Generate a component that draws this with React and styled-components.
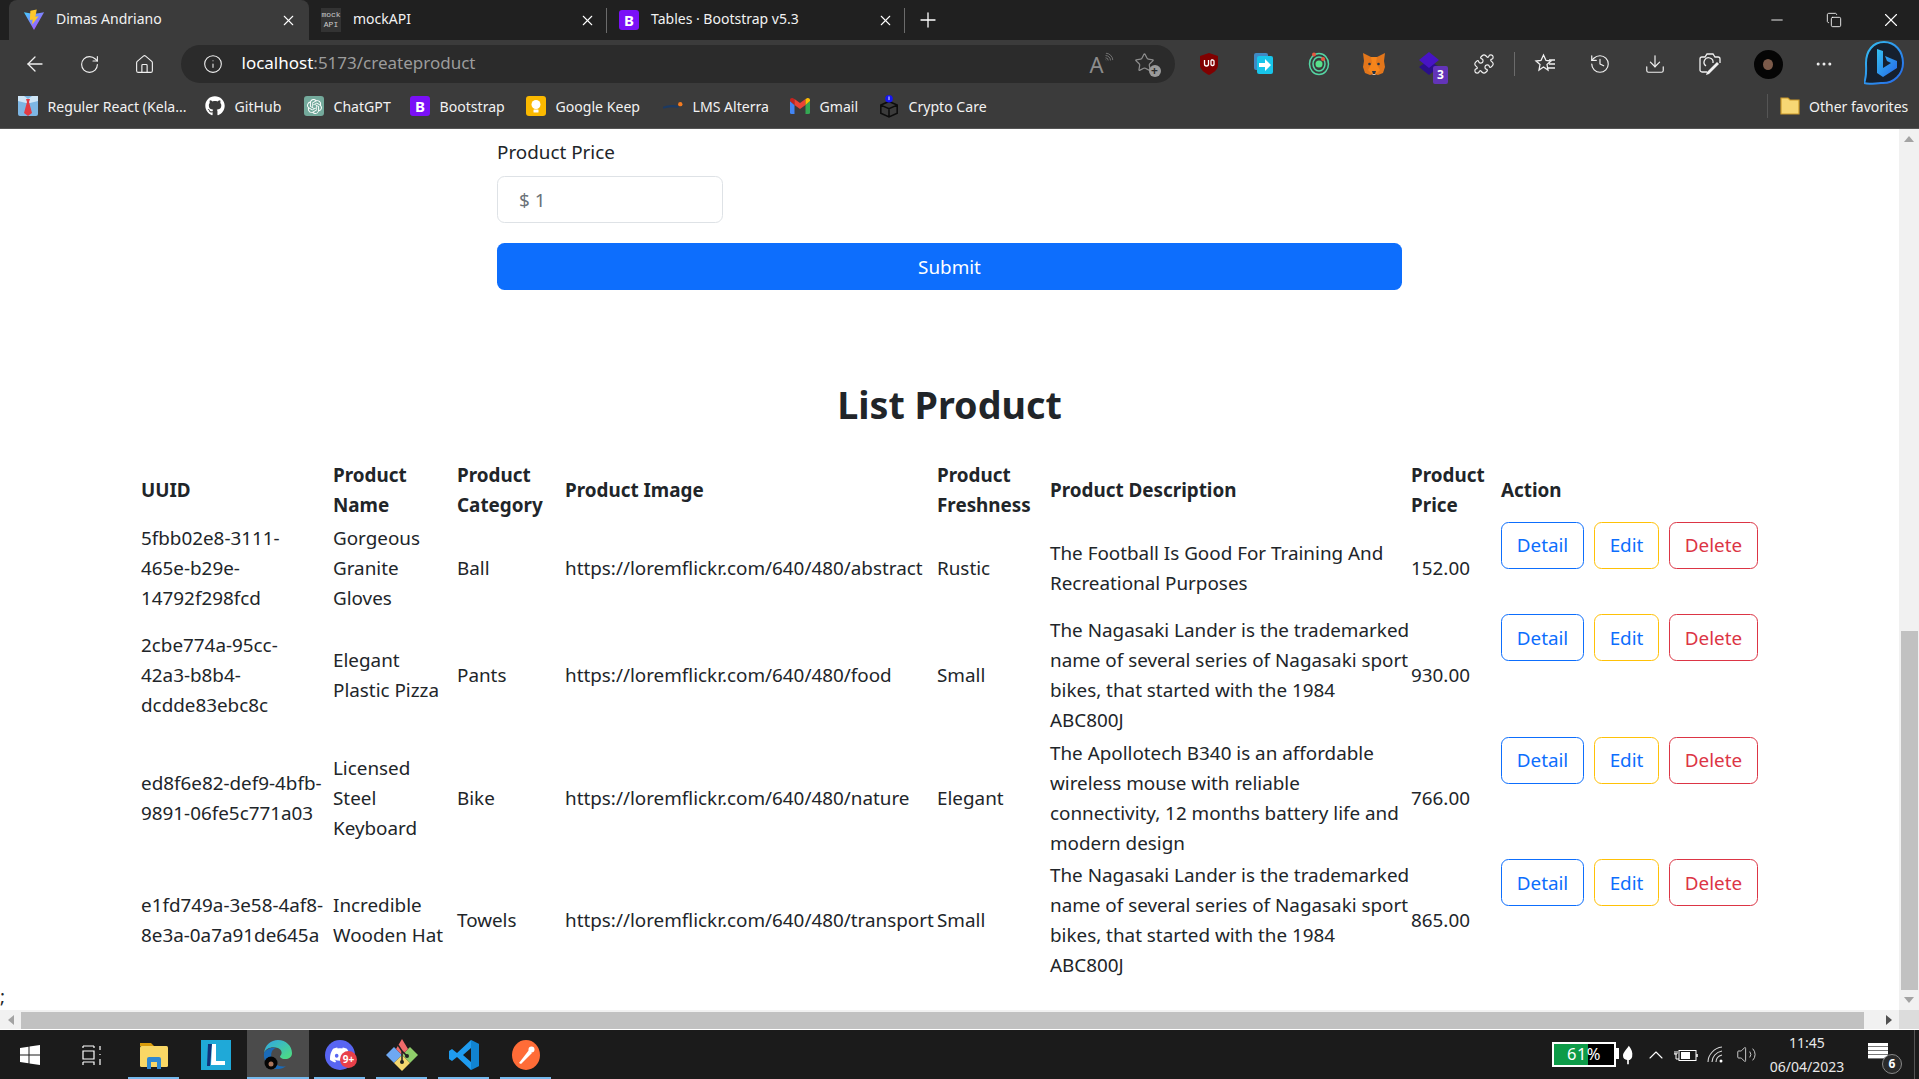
import styled, { createGlobalStyle } from "styled-components";
import {
  ArrowLeft, RotateCw, Home, Info, X, Plus, Minus, Copy, Puzzle, History, Download, MoreHorizontal, Star, ChevronUp, Volume2, Wifi,
} from "lucide-react";
import { FaGithub } from "react-icons/fa";
import { SiOpenai, SiDiscord } from "react-icons/si";

const products = [
  {
    uuid: "5fbb02e8-3111-\n465e-b29e-\n14792f298fcd",
    name: "Gorgeous\nGranite\nGloves",
    category: "Ball",
    image: "https://loremflickr.com/640/480/abstract",
    freshness: "Rustic",
    description: "The Football Is Good For Training And\nRecreational Purposes",
    price: "152.00",
  },
  {
    uuid: "2cbe774a-95cc-\n42a3-b8b4-\ndcdde83ebc8c",
    name: "Elegant\nPlastic Pizza",
    category: "Pants",
    image: "https://loremflickr.com/640/480/food",
    freshness: "Small",
    description: "The Nagasaki Lander is the trademarked\nname of several series of Nagasaki sport\nbikes, that started with the 1984\nABC800J",
    price: "930.00",
  },
  {
    uuid: "ed8f6e82-def9-4bfb-\n9891-06fe5c771a03",
    name: "Licensed\nSteel\nKeyboard",
    category: "Bike",
    image: "https://loremflickr.com/640/480/nature",
    freshness: "Elegant",
    description: "The Apollotech B340 is an affordable\nwireless mouse with reliable\nconnectivity, 12 months battery life and\nmodern design",
    price: "766.00",
  },
  {
    uuid: "e1fd749a-3e58-4af8-\n8e3a-0a7a91de645a",
    name: "Incredible\nWooden Hat",
    category: "Towels",
    image: "https://loremflickr.com/640/480/transport",
    freshness: "Small",
    description: "The Nagasaki Lander is the trademarked\nname of several series of Nagasaki sport\nbikes, that started with the 1984\nABC800J",
    price: "865.00",
  },
];

const columns = [
  { label: "UUID", width: 192 },
  { label: "Product\nName", width: 124 },
  { label: "Product\nCategory", width: 108 },
  { label: "Product Image", width: 372 },
  { label: "Product\nFreshness", width: 113 },
  { label: "Product Description", width: 361 },
  { label: "Product\nPrice", width: 90 },
  { label: "Action", width: 260 },
];

function ViteIcon() {
  return (
    <svg width="22" height="22" viewBox="0 0 24 24">
      <defs>
        <linearGradient id="vt" x1="0" y1="0" x2="1" y2="1">
          <stop offset="0" stopColor="#41d1ff" />
          <stop offset="1" stopColor="#bd34fe" />
        </linearGradient>
      </defs>
      <path d="M1 3.5 12 5.5 23 3.5 12 23Z" fill="url(#vt)" />
      <path d="M15 0.5 8 2 7.5 12 10.5 11.5 10 17 17 8 13.5 8.5Z" fill="#ffc729" />
    </svg>
  );
}

function ReactTile() {
  return (
    <svg width="20" height="20" viewBox="0 0 20 20">
      <rect width="20" height="20" rx="2" fill="#7db6e4" />
      <path d="M0 0h6l4 3 4-3h6v5l-8 2H8L0 5Z" fill="#cfe6f7" />
      <path d="M8 3h4l-1 3 3 11-4 3-4-3 3-11Z" fill="#e23b44" />
    </svg>
  );
}

function KeepIcon() {
  return (
    <svg width="20" height="20" viewBox="0 0 20 20">
      <rect width="20" height="20" rx="3" fill="#fbb900" />
      <circle cx="10" cy="8.5" r="4.5" fill="#fff" />
      <rect x="7.5" y="13.5" width="5" height="3" rx="0.5" fill="#fff" />
    </svg>
  );
}

function AlterraIcon() {
  return (
    <svg width="22" height="12" viewBox="0 0 22 12">
      <path d="M0 8C5 6 12 6 17 7" stroke="#1c3a63" strokeWidth="2.4" fill="none" />
      <circle cx="19" cy="4" r="2.4" fill="#f47b20" />
    </svg>
  );
}

function GmailIcon() {
  return (
    <svg width="20" height="16" viewBox="0 0 20 16">
      <path d="M0 3v11.5A1.5 1.5 0 0 0 1.5 16H4.5V7Z" fill="#4285f4" />
      <path d="M15.5 7v9h3a1.5 1.5 0 0 0 1.5-1.5V3Z" fill="#34a853" />
      <path d="M0 3 4.5 7V1L3 0.3C1.5-.4 0 .7 0 2Z" fill="#c5221f" />
      <path d="M4.5 1v6L10 11l5.5-4V1L10 5Z" fill="#ea4335" />
      <path d="M15.5 1v6L20 3V2c0-1.3-1.5-2.4-3-1.7Z" fill="#fbbc04" />
    </svg>
  );
}

function CryptoIcon() {
  return (
    <svg width="22" height="26" viewBox="0 0 22 26">
      <path d="M11 8 20 12v9l-9 4-9-4v-9Z M2 12l9 4 9-4 M11 16v9" fill="none" stroke="#0c0c0c" strokeWidth="1.7" />
      <circle cx="11" cy="5" r="4.2" fill="#1616f0" />
      <rect x="10.5" y="2.5" width="1" height="4" fill="#fff" />
    </svg>
  );
}

function UblockIcon() {
  return (
    <svg width="20" height="24" viewBox="0 0 20 24">
      <path d="M10 1 19 4v9c0 5-5 8-9 10-4-2-9-5-9-10V4Z" fill="#800000" />
      <path d="M5.5 8v4a2 2 0 0 0 4 0V8 M12.5 8h1.5a1.5 1.5 0 0 1 1 1v3.5a1.5 1.5 0 0 1-1 1h-1a1.5 1.5 0 0 1-1-1V9a1 1 0 0 1 .5-1Z" fill="none" stroke="#fff" strokeWidth="1.3" />
    </svg>
  );
}

function ShareIcon() {
  return (
    <svg width="20" height="22" viewBox="0 0 20 22">
      <rect x="0" y="0" width="14" height="17" rx="2" fill="#3f89c4" />
      <rect x="3" y="3" width="16" height="18" rx="2" fill="#17c5ea" />
      <path d="M5 10h6V6l6 6-6 6v-4H5Z" fill="#fff" />
    </svg>
  );
}

function TargetIcon() {
  return (
    <svg width="22" height="24" viewBox="0 0 22 24">
      <ellipse cx="11" cy="12" rx="9.5" ry="10.5" fill="none" stroke="#54d6a4" strokeWidth="1.5" />
      <ellipse cx="11" cy="12" rx="6" ry="7" fill="none" stroke="#54d6a4" strokeWidth="1.5" />
      <circle cx="11" cy="12" r="3.5" fill="#58e08c" />
      <circle cx="6" cy="2.5" r="2" fill="#e8573f" />
      <circle cx="15" cy="7" r="2" fill="#e8573f" />
    </svg>
  );
}

function FoxIcon() {
  return (
    <svg width="22" height="24" viewBox="0 0 22 24">
      <path d="M0 1 8 5h6l8-4-1 8 1 6-2 6-5 2-4-1-4 1-5-2-2-6 1-6Z" fill="#e2761b" />
      <path d="M8 5h6l-1 6 4 7-4 4H9l-4-4 4-7Z" fill="#f6851b" />
      <path d="M9 19h4l-1 3h-2Z" fill="#233447" />
      <path d="M9 22h4l-1 1h-2Z" fill="#d7c1b3" />
      <circle cx="6.5" cy="12" r="1.3" fill="#233447" />
      <circle cx="15.5" cy="12" r="1.3" fill="#233447" />
    </svg>
  );
}

function StackIcon() {
  return (
    <svg width="22" height="24" viewBox="0 0 22 24">
      <path d="M11 8 21 15 11 23 1 15Z" fill="#2a0f8a" />
      <path d="M11 0 21 8 11 16 1 8Z" fill="#4714c4" />
    </svg>
  );
}

function FavListIcon() {
  return (
    <svg width="22" height="22" viewBox="0 0 22 22" fill="none" stroke="#f0f0f0" strokeWidth="1.3">
      <path d="M9.5 2 12 7.5 17 8l-4 3.5 1 5.5-4.5-3L5 17l1-5.5L2 8l5-.5Z" />
      <path d="M15 7h6M15 11h6M13 15h8" />
    </svg>
  );
}

function CaptureIcon() {
  return (
    <svg width="24" height="24" viewBox="0 0 24 24" fill="none" stroke="#f0f0f0" strokeWidth="1.3">
      <path d="M9 20H4a2 2 0 0 1-2-2V7a2 2 0 0 1 2-2h3l2-3h6l2 3h3a2 2 0 0 1 2 2v4" />
      <path d="M8 14a4.5 4.5 0 1 1 7 -3" />
      <path d="M21 12 11 22l-3 1 1-3 10-10Z" fill="#f0f0f0" stroke="none" />
    </svg>
  );
}

function BingIcon() {
  return (
    <svg width="40" height="46" viewBox="0 0 40 46">
      <defs>
        <linearGradient id="bg" x1="0" y1="0" x2="1" y2="1">
          <stop offset="0" stopColor="#35c1f1" />
          <stop offset="1" stopColor="#2566e8" />
        </linearGradient>
      </defs>
      <path d="M20 1C9 1 2 10 2 22c0 6 1 13-2 20 5 2 12 0 17 0 13 1 22-9 22-20C39 10 31 1 20 1Z" fill="#16202e" stroke="url(#bg)" strokeWidth="2" />
      <path d="M13 8l6 2v17l8-5-4-2-2-5 12 5v7L19 36l-6-4Z" fill="url(#bg)" />
    </svg>
  );
}

function WinLogo() {
  return (
    <svg width="20" height="20" viewBox="0 0 20 20" fill="#fff">
      <path d="M0 3 8.5 1.8V9.5H0Z M9.5 1.6 20 0V9.5H9.5Z M0 10.5H8.5V18.2L0 17Z M9.5 10.5H20V20L9.5 18.4Z" />
    </svg>
  );
}

function TaskViewIcon() {
  return (
    <svg width="20" height="20" viewBox="0 0 20 20" fill="none" stroke="#fff" strokeWidth="1.2">
      <path d="M1 1h11M1 6h11v8H1Z M1 17h11v3M1 17v3M12 1v2M1 1v2" />
      <path d="M18 1v4M18 9v1M18 14v6" />
    </svg>
  );
}

function ExplorerIcon() {
  return (
    <svg width="28" height="28" viewBox="0 0 28 28">
      <path d="M0 2h11l3 3H0Z" fill="#d99b0a" />
      <rect y="5" width="28" height="21" rx="1.5" fill="#f9d765" />
      <path d="M7 28V18a2 2 0 0 1 2-2h10a2 2 0 0 1 2 2v10h-4v-7h-6v7Z" fill="#2f88d0" />
    </svg>
  );
}

function LTile() {
  return (
    <svg width="30" height="30" viewBox="0 0 30 30">
      <rect width="30" height="30" fill="#1fa9d8" />
      <path d="M7 4h4l-2 22H6Z" fill="#12337a" />
      <path d="M11 4h4v17h9v4H10Z" fill="#fff" />
    </svg>
  );
}

function EdgeIcon() {
  return (
    <svg width="32" height="32" viewBox="0 0 32 32">
      <defs>
        <linearGradient id="ed" x1="0" y1="0" x2="1" y2="1">
          <stop offset="0" stopColor="#2fa5e8" />
          <stop offset="1" stopColor="#50e07a" />
        </linearGradient>
      </defs>
      <path d="M2 14C3 6 9 1 16 1c8 0 14 6 14 13 0 4-3 6-7 6s-5-2-5-3c2-1 3-6-2-8C10 7 4 9 2 14Z" fill="url(#ed)" />
      <path d="M2 14c2-4 8-6 12-5-4 1-6 6-4 11 2 5 8 9 14 7-2 2-5 3-8 3C7 30 1 23 2 14Z" fill="#1a6bb8" />
      <circle cx="9" cy="24" r="6.5" fill="#050505" />
      <circle cx="9" cy="25" r="2.5" fill="#a8755c" />
    </svg>
  );
}

function GitForkIcon() {
  return (
    <svg width="32" height="32" viewBox="0 0 32 32">
      <path d="M16 16 24 8 32 16 24 24Z" fill="#8fce6a" />
      <path d="M16 16 8 8 0 16 8 24Z" fill="#6ea8f2" />
      <path d="M16 16 10 10 16 0 22 10Z" fill="#f06b6b" />
      <path d="M16 16 8 24 16 32 24 24Z" fill="#f5d76e" />
      <path d="M12 6 16 12V22M16 12 21 17" stroke="#222" strokeWidth="1.5" fill="none" />
      <circle cx="16" cy="23" r="2" fill="#222" />
      <circle cx="21" cy="17" r="2" fill="#222" />
    </svg>
  );
}

function CodeIcon() {
  return (
    <svg width="30" height="30" viewBox="0 0 30 30">
      <path d="M22 0 30 4V26L22 30 8 17 3 21 0 19V11L3 9 8 13ZM22 8 14 15 22 22Z" fill="#1f9cf0" />
      <path d="M22 0 30 4V26L22 30Z" fill="#0065a9" opacity="0.45" />
    </svg>
  );
}

function PostmanIcon() {
  return (
    <svg width="28" height="30" viewBox="0 0 28 30">
      <ellipse cx="14" cy="15" rx="14" ry="15" fill="#ff6c37" />
      <path d="M7 23 17 10l3 3L9 24Z" fill="#fff" />
      <circle cx="19.5" cy="9.5" r="3" fill="#fff" />
    </svg>
  );
}

function TrayBattery() {
  return (
    <svg width="24" height="14" viewBox="0 0 24 14" fill="none" stroke="#fff">
      <path d="M0 6h3M1 3v3M3 3v3M2 6v5h3" strokeWidth="1" />
      <rect x="5" y="2.5" width="17" height="10" />
      <rect x="7" y="4" width="9" height="7" fill="#fff" stroke="none" />
      <path d="M23 6v3" strokeWidth="1.5" />
    </svg>
  );
}

function TrayWifi() {
  return (
    <svg width="18" height="18" viewBox="0 0 18 18" fill="none" stroke="#d8d8d8" strokeWidth="1.1">
      <path d="M1 16C1 9 7 2 15 1M5 16C5 11 9 6 15 5M9 16c0-3 2-6 6-7" />
      <circle cx="14" cy="15" r="1.5" fill="#fff" stroke="none" />
    </svg>
  );
}

function TrayLeaf() {
  return (
    <svg width="10" height="20" viewBox="0 0 12 22">
      <path d="M7 0C10 4 12 8 11 13c-.5 3-3 4-4 4v5H5v-5C2 17 0 15 0 12 0 8 4 5 7 0Z" fill="#fff" />
    </svg>
  );
}

function ArrowGlyph({ dir, color = "#a3a3a3" }) {
  const points = {
    up: "0,6 5,0 10,6",
    down: "0,0 10,0 5,6",
    left: "6,0 6,10 0,5",
    right: "0,0 6,5 0,10",
  };
  const vertical = dir === "up" || dir === "down";
  return (
    <svg width={vertical ? 10 : 6} height={vertical ? 6 : 10}>
      <polygon points={points[dir]} fill={color} />
    </svg>
  );
}

export default function App() {
  const bookmarks = [
    { label: "Reguler React (Kela...", width: 187, icon: <ReactTile /> },
    { label: "GitHub", width: 99, icon: <FaGithub size={20} color="#fff" /> },
    { label: "ChatGPT", width: 106, icon: <GptTile><SiOpenai size={15} color="#fff" /></GptTile> },
    { label: "Bootstrap", width: 116, icon: <BootTile>B</BootTile> },
    { label: "Google Keep", width: 137, icon: <KeepIcon /> },
    { label: "LMS Alterra", width: 127, icon: <AlterraIcon /> },
    { label: "Gmail", width: 89, icon: <GmailIcon /> },
    { label: "Crypto Care", width: 110, icon: <CryptoIcon /> },
  ];

  return (
    <Screen>
      <GlobalStyle />
      <TabStrip>
        <Tab $active>
          <ViteIcon />
          <TabTitle>Dimas Andriano</TabTitle>
          <X size={17} color="#fff" strokeWidth={1.5} />
        </Tab>
        <Tab>
          <MockFav>mock<br />API</MockFav>
          <TabTitle>mockAPI</TabTitle>
          <X size={17} color="#fff" strokeWidth={1.5} />
        </Tab>
        <Tab>
          <BootTile>B</BootTile>
          <TabTitle>Tables · Bootstrap v5.3</TabTitle>
          <X size={17} color="#fff" strokeWidth={1.5} />
        </Tab>
        <NewTab><Plus size={24} color="#fff" strokeWidth={1.3} /></NewTab>
        <WindowControls>
          <WinButton><Minus size={18} color="#fff" strokeWidth={1.2} /></WinButton>
          <WinButton><Copy size={16} color="#fff" strokeWidth={1.3} /></WinButton>
          <WinButton><X size={22} color="#fff" strokeWidth={1.2} /></WinButton>
        </WindowControls>
      </TabStrip>

      <Toolbar>
        <Slot><ArrowLeft size={24} color="#f0f0f0" strokeWidth={1.3} /></Slot>
        <Slot><RotateCw size={21} color="#f0f0f0" strokeWidth={1.3} /></Slot>
        <Slot><Home size={21} color="#f0f0f0" strokeWidth={1.3} /></Slot>
        <AddressBar>
          <Info size={20} color="#f0f0f0" strokeWidth={1.3} />
          <Url>localhost<span>:5173/createproduct</span></Url>
          <ReadAloud>A<Wifi size={11} color="#8d8d8d" strokeWidth={1.5} /></ReadAloud>
          <AddFav>
            <Star size={21} color="#8d8d8d" strokeWidth={1.4} />
            <AddFavDot>+</AddFavDot>
          </AddFav>
        </AddressBar>
        <Slot><UblockIcon /></Slot>
        <Slot><ShareIcon /></Slot>
        <Slot><TargetIcon /></Slot>
        <Slot><FoxIcon /></Slot>
        <Slot>
          <StackIcon />
          <CountBadge>3</CountBadge>
        </Slot>
        <Slot><Puzzle size={22} color="#f0f0f0" strokeWidth={1.3} /></Slot>
        <ToolbarDivider />
        <Slot><FavListIcon /></Slot>
        <Slot><History size={22} color="#f0f0f0" strokeWidth={1.3} /></Slot>
        <Slot><Download size={22} color="#f0f0f0" strokeWidth={1.3} /></Slot>
        <Slot><CaptureIcon /></Slot>
        <Slot $w={62}><Avatar><AvatarFace /></Avatar></Slot>
        <Slot $w={50}><MoreHorizontal size={20} color="#f0f0f0" strokeWidth={1.6} /></Slot>
        <Slot $w={70}><BingIcon /></Slot>
      </Toolbar>

      <BookmarkBar>
        {bookmarks.map((b) => (
          <Bookmark key={b.label} $w={b.width}>
            <BookmarkIcon>{b.icon}</BookmarkIcon>
            {b.label}
          </Bookmark>
        ))}
        <OtherFavorites>
          <svg width="20" height="20" viewBox="0 0 20 20">
            <path d="M1 2h7l2 2h9v14H1Z" fill="#f7d774" stroke="#c9982a" strokeWidth="1.2" />
          </svg>
          Other favorites
        </OtherFavorites>
      </BookmarkBar>

      <Viewport>
        <Page>
          <FormBlock>
            <FieldLabel>Product Price</FieldLabel>
            <PriceInput readOnly value="$ 1" />
            <SubmitButton type="button">Submit</SubmitButton>
          </FormBlock>
          <Heading>List Product</Heading>
          <ProductTable>
            <colgroup>
              {columns.map((c) => <col key={c.label} width={c.width} />)}
            </colgroup>
            <thead>
              <tr>
                {columns.map((c) => <Th key={c.label}>{c.label}</Th>)}
              </tr>
            </thead>
            <tbody>
              {products.map((p) => (
                <tr key={p.uuid}>
                  <Td>{p.uuid}</Td>
                  <Td>{p.name}</Td>
                  <Td>{p.category}</Td>
                  <Td>{p.image}</Td>
                  <Td>{p.freshness}</Td>
                  <Td>{p.description}</Td>
                  <Td>{p.price}</Td>
                  <ActionCell>
                    <Actions>
                      <OutlineButton $border="#0d6efd" $w={83} $color="#0d6efd">Detail</OutlineButton>
                      <OutlineButton $border="#ffc107" $w={65} $color="#0d6efd">Edit</OutlineButton>
                      <OutlineButton $border="#dc3545" $w={89} $color="#dc3545">Delete</OutlineButton>
                    </Actions>
                  </ActionCell>
                </tr>
              ))}
            </tbody>
          </ProductTable>
          <Stray>;</Stray>
        </Page>
        <VScroll>
          <ScrollEnd><ArrowGlyph dir="up" /></ScrollEnd>
          <VTrack><VThumb /></VTrack>
          <ScrollEnd><ArrowGlyph dir="down" /></ScrollEnd>
        </VScroll>
      </Viewport>

      <HScroll>
        <HEnd><ArrowGlyph dir="left" /></HEnd>
        <HThumb />
        <HEnd><ArrowGlyph dir="right" color="#505050" /></HEnd>
        <HCorner />
      </HScroll>

      <Taskbar>
        <TaskSlot $w={60}><WinLogo /></TaskSlot>
        <TaskSlot $w={63}><TaskViewIcon /></TaskSlot>
        <TaskSlot $open><ExplorerIcon /></TaskSlot>
        <TaskSlot><LTile /></TaskSlot>
        <TaskSlot $open $active><EdgeIcon /></TaskSlot>
        <TaskSlot $open>
          <DiscordRound><SiDiscord size={20} color="#fff" /></DiscordRound>
          <DiscordBadge>9+</DiscordBadge>
        </TaskSlot>
        <TaskSlot $open><GitForkIcon /></TaskSlot>
        <TaskSlot $open><CodeIcon /></TaskSlot>
        <TaskSlot $open><PostmanIcon /></TaskSlot>
        <Tray>
          <BatteryMeter>
            <BatteryFill />
            <BatteryText>61%</BatteryText>
            <BatteryNub />
          </BatteryMeter>
          <TraySlot $w={24}><TrayLeaf /></TraySlot>
          <TraySlot $w={32}><ChevronUp size={24} color="#fff" strokeWidth={1.1} /></TraySlot>
          <TraySlot $w={28}><TrayBattery /></TraySlot>
          <TraySlot $w={32}><TrayWifi /></TraySlot>
          <TraySlot $w={28}><Volume2 size={21} color="#e0e0e0" strokeWidth={1} /></TraySlot>
          <Clock>
            <span>11:45</span>
            <span>06/04/2023</span>
          </Clock>
          <TraySlot $w={46}>
            <Notification />
            <NotificationCount>6</NotificationCount>
          </TraySlot>
          <ShowDesktop />
        </Tray>
      </Taskbar>
    </Screen>
  );
}

const GlobalStyle = createGlobalStyle`
  * { box-sizing: border-box; }
  html, body { margin: 0; padding: 0; height: 100%; overflow: hidden; }
  body { font-family: "Noto Sans", "Open Sans", sans-serif; background: #fff; }
`;

const Screen = styled.div`
  width: 1919px;
  height: 1079px;
  display: flex;
  flex-direction: column;
  overflow: hidden;
`;

const TabStrip = styled.div`
  height: 40px;
  flex: none;
  background: #202020;
  display: flex;
  align-items: stretch;
  padding-left: 9px;
`;

const Tab = styled.div`
  width: ${(p) => (p.$active ? 300 : 298)}px;
  display: flex;
  align-items: center;
  gap: ${(p) => (p.$active ? 11 : 12)}px;
  padding: ${(p) => (p.$active ? "0 12px 0 14px" : "0 11px 0 12px")};
  background: ${(p) => (p.$active ? "#3b3b3b" : "transparent")};
  border-radius: 8px 8px 0 0;
  position: relative;
  &:not(:first-child)::after {
    content: "";
    position: absolute;
    right: 0;
    top: 8px;
    height: 25px;
    width: 1px;
    background: #6b6b6b;
  }
`;

const TabTitle = styled.span`
  flex: 1;
  color: #f2f2f2;
  font-size: 14px;
  line-height: 36px;
  height: 38px;
  white-space: nowrap;
`;

const MockFav = styled.div`
  width: 20px;
  height: 24px;
  background: #333;
  color: #c9c9c9;
  font: 8px/10px "Liberation Mono", monospace;
  text-align: center;
  padding-top: 2px;
`;

const BootTile = styled.div`
  width: 20px;
  height: 20px;
  border-radius: 3px;
  background: #7a10f7;
  color: #fff;
  font: 700 15px/20px "Noto Sans", sans-serif;
  text-align: center;
`;

const GptTile = styled.div`
  width: 20px;
  height: 20px;
  border-radius: 3px;
  background: #74aa9c;
  display: flex;
  align-items: center;
  justify-content: center;
`;

const NewTab = styled.div`
  width: 46px;
  display: flex;
  align-items: center;
  justify-content: center;
`;

const WindowControls = styled.div`
  margin-left: auto;
  display: flex;
`;

const WinButton = styled.div`
  width: 57px;
  display: flex;
  align-items: center;
  justify-content: center;
`;

const Toolbar = styled.div`
  height: 48px;
  flex: none;
  background: #3b3b3b;
  display: flex;
  align-items: center;
  padding-left: 7px;
`;

const Slot = styled.div`
  width: ${(p) => p.$w || 55}px;
  height: 48px;
  flex: none;
  display: flex;
  align-items: center;
  justify-content: center;
  position: relative;
`;

const AddressBar = styled.div`
  width: 994px;
  height: 38px;
  margin: 0 6.5px 0 8.5px;
  flex: none;
  background: #2b2b2b;
  border-radius: 19px;
  display: flex;
  align-items: center;
  padding-left: 22px;
`;

const Url = styled.div`
  flex: 1;
  margin-left: 19px;
  font-size: 17px;
  line-height: 34px;
  height: 36px;
  color: #fff;
  span { color: #9c9c9c; }
`;

const ReadAloud = styled.div`
  width: 28px;
  display: flex;
  align-items: flex-start;
  color: #8d8d8d;
  font-size: 22px;
  line-height: 24px;
  svg { transform: rotate(45deg); margin-left: -1px; }
`;

const AddFav = styled.div`
  width: 24px;
  height: 24px;
  margin: 0 17px 0 16px;
  position: relative;
`;

const AddFavDot = styled.div`
  position: absolute;
  right: -3px;
  bottom: -1px;
  width: 12px;
  height: 12px;
  border-radius: 50%;
  background: #9a9a9a;
  color: #2b2b2b;
  font: 700 12px/12px "Noto Sans", sans-serif;
  text-align: center;
`;

const CountBadge = styled.div`
  position: absolute;
  right: 8px;
  bottom: 4px;
  width: 15px;
  height: 18px;
  background: #6334b8;
  border-radius: 2px;
  color: #fff;
  font: 700 12px/18px "Noto Sans", sans-serif;
  text-align: center;
`;

const ToolbarDivider = styled.div`
  width: 1px;
  height: 24px;
  margin: 0 2px 0 3px;
  background: #6b6b6b;
  flex: none;
`;

const Avatar = styled.div`
  width: 29px;
  height: 29px;
  border-radius: 50%;
  background: #050505;
  display: flex;
  align-items: center;
  justify-content: center;
`;

const AvatarFace = styled.div`
  width: 10px;
  height: 11px;
  border-radius: 50%;
  background: #7b5a4a;
`;

const BookmarkBar = styled.div`
  height: 41px;
  flex: none;
  background: #3b3b3b;
  border-bottom: 1px solid #555;
  display: flex;
  align-items: center;
  padding: 0 0 4px 18px;
`;

const Bookmark = styled.div`
  width: ${(p) => p.$w}px;
  flex: none;
  display: flex;
  align-items: center;
  gap: 9.5px;
  color: #f2f2f2;
  font-size: 14.1px;
  white-space: nowrap;
`;

const BookmarkIcon = styled.span`
  width: 20px;
  height: 20px;
  display: flex;
  align-items: center;
  justify-content: center;
  flex: none;
`;

const OtherFavorites = styled.div`
  margin-left: auto;
  width: 152px;
  height: 24px;
  flex: none;
  display: flex;
  align-items: center;
  gap: 9px;
  padding-left: 12px;
  border-left: 1px solid #555;
  color: #f2f2f2;
  font-size: 14px;
  white-space: nowrap;
`;

const Viewport = styled.div`
  flex: 1;
  min-height: 0;
  display: flex;
`;

const Page = styled.main`
  flex: 1;
  min-width: 0;
  overflow: hidden;
  padding-top: 8px;
  background: #fff;
  color: #212529;
  font-size: 18.85px;
  line-height: 30px;
`;

const FormBlock = styled.form`
  width: 905px;
  margin: 0 auto;
  display: flex;
  flex-direction: column;
`;

const FieldLabel = styled.label`
  margin-bottom: 9px;
`;

const PriceInput = styled.input`
  width: 226px;
  height: 47px;
  padding: 0 21px;
  border: 1.25px solid #dee2e6;
  border-radius: 7.5px;
  font: inherit;
  color: #6b7279;
  outline: none;
`;

const SubmitButton = styled.button`
  height: 47px;
  margin-top: 20px;
  border: 0;
  border-radius: 7.5px;
  background: #0d6efd;
  color: #fff;
  font: inherit;
`;

const Heading = styled.h2`
  margin: 91px 0 30px;
  font-size: 37.7px;
  line-height: 48px;
  font-weight: 700;
  text-align: center;
  color: #212529;
`;

const ProductTable = styled.table`
  margin-left: 140px;
  width: 1620px;
  table-layout: fixed;
  border-collapse: collapse;
`;

const Th = styled.th`
  padding: 1.25px 0 1.25px 1px;
  text-align: left;
  vertical-align: middle;
  white-space: pre;
  font-weight: 700;
`;

const Td = styled.td`
  padding: 1.25px 0 1.25px 1px;
  vertical-align: middle;
  white-space: pre;
`;

const ActionCell = styled(Td)`
  vertical-align: top;
`;

const Actions = styled.div`
  display: flex;
  gap: 10px;
  margin-top: -1px;
`;

const OutlineButton = styled.button`
  width: ${(p) => p.$w}px;
  height: 47px;
  padding: 0;
  border: 1.25px solid ${(p) => p.$border};
  border-radius: 7.5px;
  background: #fff;
  color: ${(p) => p.$color};
  font: inherit;
`;

const Stray = styled.div`
  height: 30px;
  margin-top: -1px;
`;

const VScroll = styled.div`
  width: 20px;
  flex: none;
  background: #f1f1f1;
  display: flex;
  flex-direction: column;
`;

const ScrollEnd = styled.div`
  height: 20px;
  flex: none;
  display: flex;
  align-items: center;
  justify-content: center;
`;

const VTrack = styled.div`
  flex: 1;
  display: flex;
  flex-direction: column;
  justify-content: flex-end;
  padding: 0 1px 0 2px;
`;

const VThumb = styled.div`
  height: 359px;
  background: #c1c1c1;
`;

const HScroll = styled.div`
  height: 20px;
  flex: none;
  background: #f1f1f1;
  display: flex;
  align-items: stretch;
  border-bottom: 1px solid #fff;
`;

const HEnd = styled.div`
  width: 21px;
  flex: none;
  display: flex;
  align-items: center;
  justify-content: center;
`;

const HThumb = styled.div`
  flex: 1;
  margin: 2px 14px 0 0;
  background: #c1c1c1;
`;

const HCorner = styled.div`
  width: 20px;
  flex: none;
  background: #dcdcdc;
`;

const Taskbar = styled.div`
  height: 49px;
  flex: none;
  background: #1b1b1b;
  display: flex;
  align-items: center;
`;

const TaskSlot = styled.div`
  width: ${(p) => p.$w || 62}px;
  height: 49px;
  flex: none;
  display: flex;
  align-items: center;
  justify-content: center;
  position: relative;
  background: ${(p) => (p.$active ? "#4b4b4b" : "transparent")};
  &::after {
    content: "";
    display: ${(p) => (p.$open ? "block" : "none")};
    position: absolute;
    bottom: 0;
    left: ${(p) => (p.$active ? 0 : 5)}px;
    right: ${(p) => (p.$active ? 0 : 6)}px;
    height: 2.5px;
    background: #76b9ed;
  }
`;

const DiscordRound = styled.div`
  width: 30px;
  height: 30px;
  border-radius: 50%;
  background: #5865f2;
  display: flex;
  align-items: center;
  justify-content: center;
`;

const DiscordBadge = styled.div`
  position: absolute;
  left: 31px;
  top: 21px;
  width: 17px;
  height: 17px;
  border-radius: 50%;
  background: #e8404a;
  color: #fff;
  font: 700 10px/17px "Noto Sans", sans-serif;
  text-align: center;
`;

const Tray = styled.div`
  margin-left: auto;
  display: flex;
  align-items: center;
  height: 49px;
`;

const BatteryMeter = styled.div`
  width: 64px;
  height: 25px;
  position: relative;
  border: 2.5px solid #fff;
  background: #000;
`;

const BatteryFill = styled.div`
  width: 34px;
  height: 100%;
  background: #0d9b48;
`;

const BatteryText = styled.div`
  position: absolute;
  inset: 0;
  color: #fff;
  font-size: 16.5px;
  line-height: 20px;
  text-align: center;
  letter-spacing: 0.5px;
`;

const BatteryNub = styled.div`
  position: absolute;
  right: -5px;
  top: 4px;
  width: 3px;
  height: 11px;
  background: #fff;
`;

const TraySlot = styled.div`
  width: ${(p) => p.$w}px;
  height: 49px;
  flex: none;
  display: flex;
  align-items: center;
  justify-content: center;
  position: relative;
`;

const Clock = styled.div`
  width: 94px;
  flex: none;
  display: flex;
  flex-direction: column;
  align-items: center;
  gap: 5px;
  color: #e8e8e8;
  font-size: 14px;
  line-height: 19px;
`;

const Notification = styled.div`
  width: 20px;
  height: 16px;
  margin: -8px -2px 0 0;
  background: repeating-linear-gradient(#fff 0 3px, #777 3px 4px);
`;

const NotificationCount = styled.div`
  position: absolute;
  left: 28px;
  top: 24px;
  width: 20px;
  height: 20px;
  border-radius: 50%;
  background: #2a2a2a;
  border: 1px solid #888;
  color: #fff;
  font: 700 12px/18px "Noto Sans", sans-serif;
  text-align: center;
`;

const ShowDesktop = styled.div`
  width: 15px;
  height: 49px;
  border-right: 1px solid #555;
  margin-right: 4px;
  flex: none;
`;
